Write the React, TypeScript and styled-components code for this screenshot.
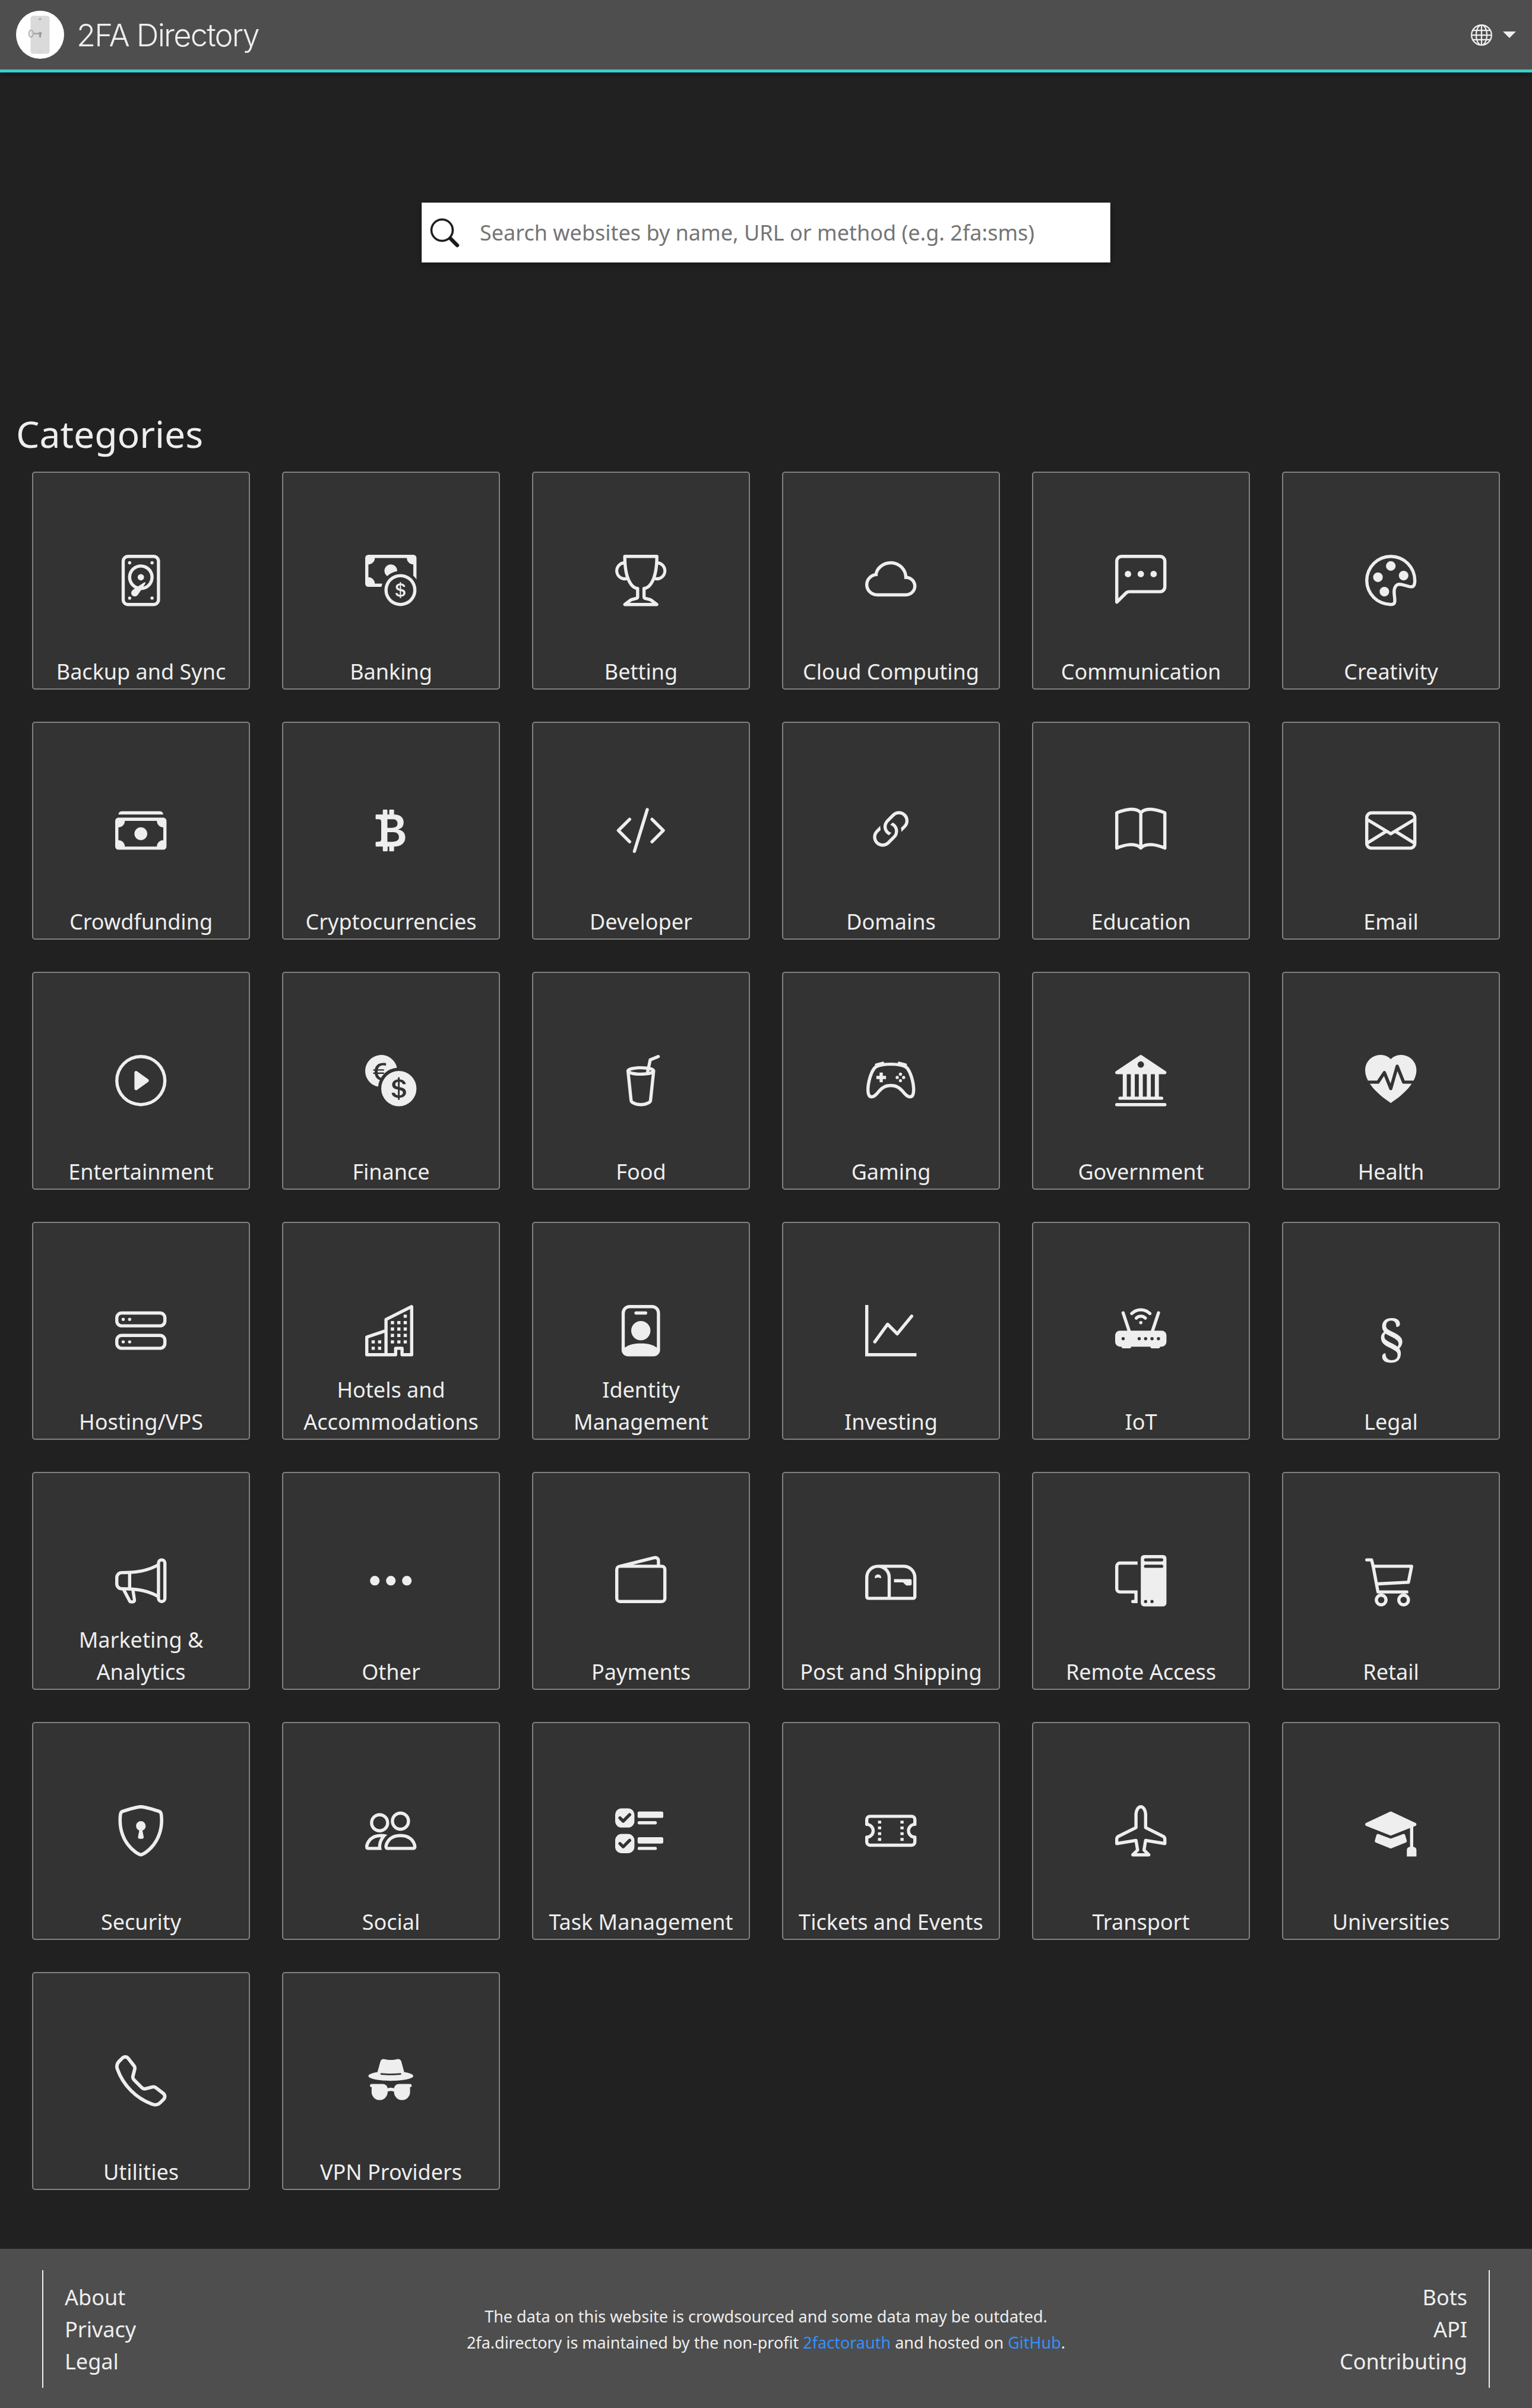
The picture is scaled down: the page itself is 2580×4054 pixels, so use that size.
import React from 'react';
import styled, { createGlobalStyle } from 'styled-components';
import type { IconType } from 'react-icons';
import {
  BsDeviceHdd, BsCashCoin, BsTrophy, BsCloud, BsChatLeftDots, BsPalette,
  BsCashStack, BsCurrencyBitcoin, BsCodeSlash, BsLink45Deg, BsBook, BsEnvelope,
  BsPlayCircle, BsCurrencyExchange, BsCupStraw, BsController, BsBank2, BsHeartPulseFill,
  BsHddStack, BsBuildings, BsPersonBadge, BsGraphUp, BsRouterFill,
  BsMegaphone, BsThreeDots, BsWallet2, BsMailbox, BsPcDisplay, BsCart3,
  BsShieldLock, BsPeople, BsUiChecks, BsTicketPerforated, BsAirplane, BsMortarboardFill,
  BsTelephone, BsGlobe,
} from 'react-icons/bs';

const GlobalStyle = createGlobalStyle`
  *, *::before, *::after { box-sizing: border-box; }
  body {
    margin: 0;
    background: #212121;
    color: #eee;
    font-family: "Noto Sans", "Liberation Sans", sans-serif;
    font-size: 36px;
    line-height: 54px;
  }
`;

const Page = styled.div`
  display: flex;
  flex-direction: column;
  min-height: 4054px;
`;

const Navbar = styled.header`
  display: flex;
  align-items: center;
  justify-content: space-between;
  height: 122px;
  padding: 0 27px;
  background: #4e4e4e;
  border-bottom: 5px solid #36cfcf;
  box-shadow: 0 3px 9px rgba(0, 0, 0, 0.4);
`;

const Brand = styled.a`
  display: flex;
  align-items: center;
  gap: 21px;
  color: #eee;
`;

const Logo = styled.svg`
  display: block;
  width: 81px;
  height: 81px;
`;

const BrandName = styled.span`
  font-family: Inter, "Liberation Sans", sans-serif;
  font-size: 52.3px;
  font-weight: 300;
  letter-spacing: -1.8px;
  white-space: nowrap;
`;

const LanguageButton = styled.button`
  display: flex;
  align-items: center;
  gap: 18px;
  padding: 0;
  border: 0;
  background: none;
  color: #eee;
  font-size: 36px;
`;

const Caret = styled.span`
  border-top: 11px solid #eee;
  border-left: 11px solid transparent;
  border-right: 11px solid transparent;
`;

const SearchArea = styled.section`
  display: flex;
  justify-content: center;
  padding: 219px 0;
`;

const SearchBox = styled.label`
  display: flex;
  align-items: center;
  width: 1160px;
  height: 101px;
  padding-left: 14px;
  gap: 35px;
  background: #fff;
  border: 1px solid #ddd;
  color: #1a1a1a;
  box-shadow: 0 4px 9px rgba(0, 0, 0, 0.3);
`;

const Magnifier = styled.svg`
  width: 48px;
  height: 48px;
  overflow: visible;
  fill: currentColor;
  stroke: currentColor;
  stroke-width: 0.2;
`;

const SearchInput = styled.input`
  flex: 1;
  padding: 0;
  border: 0;
  outline: 0;
  background: none;
  font-family: inherit;
  font-size: 36px;
  line-height: 54px;
  &::placeholder { color: #757575; opacity: 1; }
`;

const Content = styled.main`
  flex: 1;
  padding: 0 27px;
`;

const Heading = styled.h1`
  margin: 31px 0 27px;
  font-size: 62.4px;
  font-weight: 400;
  line-height: 75px;
`;

const Grid = styled.div`
  display: grid;
  grid-template-columns: repeat(6, 367px);
  gap: 54px;
  padding: 0 27px;
`;

const Card = styled.a`
  display: grid;
  height: 367px;
  border: 2px solid #808080;
  border-radius: 5px;
  background: #333;
  color: #eee;
  text-align: center;
  > * { grid-area: 1 / 1; }
`;

const CardIcon = styled.span`
  display: grid;
  place-items: center;
  font-size: 86.4px;
`;

const SectionSign = styled.span`
  padding-top: 21px;
  font-family: "Noto Serif", "Liberation Serif", serif;
  line-height: 1;
`;

const CardTitle = styled.span`
  align-self: end;
  padding: 0 10px 1px;
`;

const Footer = styled.footer`
  display: flex;
  justify-content: space-between;
  align-items: center;
  height: 268px;
  padding: 2px 71px 0;
  background: #4e4e4e;
`;

const FooterLinks = styled.nav<{ $end?: boolean }>`
  display: flex;
  flex: 1;
  flex-direction: column;
  justify-content: center;
  height: 198px;
  padding: 2px 36px 0;
  text-align: ${p => (p.$end ? 'right' : 'left')};
  border-${p => (p.$end ? 'right' : 'left')}: 2px solid #eee;
`;

const Note = styled.p`
  margin: 0;
  padding-top: 2px;
  font-size: 27px;
  line-height: 44px;
  text-align: center;
`;

const Link = styled.a`
  color: #3391ff;
`;

function Incognito() {
  return (
    <svg viewBox="0 0 16 16" width="1em" height="1em" fill="currentColor">
      <path
        fillRule="evenodd"
        d="m4.736 1.968-.892 3.269-.014.058C2.113 5.568 1 6.006 1 6.5 1 7.328 4.134 8 8 8s7-.672 7-1.5c0-.494-1.113-.932-2.83-1.205l-.014-.058-.892-3.27c-.146-.533-.698-.849-1.239-.734C9.411 1.363 8.62 1.5 8 1.5s-1.411-.136-2.025-.267c-.541-.115-1.093.2-1.239.735m.015 3.867a.25.25 0 0 1 .274-.224c.9.092 1.91.143 2.975.143a30 30 0 0 0 2.975-.143.25.25 0 0 1 .05.498c-.918.093-1.944.145-3.025.145s-2.107-.052-3.025-.145a.25.25 0 0 1-.224-.274M2 10.5q.001-.264.085-.5H2a.5.5 0 0 1 0-1h3.5a1.5 1.5 0 0 1 1.488 1.312 3.5 3.5 0 0 1 2.024 0A1.5 1.5 0 0 1 10.5 9H14a.5.5 0 0 1 0 1h-.085q.084.236.085.5v1a2.5 2.5 0 0 1-5 0v-.14l-.21-.07a2.5 2.5 0 0 0-1.58 0l-.21.07v.14a2.5 2.5 0 0 1-5 0z"
      />
    </svg>
  );
}

type Category = { name: string; icon?: IconType | (() => React.ReactElement) };

const categories: Category[] = [
  { name: 'Backup and Sync', icon: BsDeviceHdd },
  { name: 'Banking', icon: BsCashCoin },
  { name: 'Betting', icon: BsTrophy },
  { name: 'Cloud Computing', icon: BsCloud },
  { name: 'Communication', icon: BsChatLeftDots },
  { name: 'Creativity', icon: BsPalette },
  { name: 'Crowdfunding', icon: BsCashStack },
  { name: 'Cryptocurrencies', icon: BsCurrencyBitcoin },
  { name: 'Developer', icon: BsCodeSlash },
  { name: 'Domains', icon: BsLink45Deg },
  { name: 'Education', icon: BsBook },
  { name: 'Email', icon: BsEnvelope },
  { name: 'Entertainment', icon: BsPlayCircle },
  { name: 'Finance', icon: BsCurrencyExchange },
  { name: 'Food', icon: BsCupStraw },
  { name: 'Gaming', icon: BsController },
  { name: 'Government', icon: BsBank2 },
  { name: 'Health', icon: BsHeartPulseFill },
  { name: 'Hosting/VPS', icon: BsHddStack },
  { name: 'Hotels and Accommodations', icon: BsBuildings },
  { name: 'Identity Management', icon: BsPersonBadge },
  { name: 'Investing', icon: BsGraphUp },
  { name: 'IoT', icon: BsRouterFill },
  { name: 'Legal' },
  { name: 'Marketing & Analytics', icon: BsMegaphone },
  { name: 'Other', icon: BsThreeDots },
  { name: 'Payments', icon: BsWallet2 },
  { name: 'Post and Shipping', icon: BsMailbox },
  { name: 'Remote Access', icon: BsPcDisplay },
  { name: 'Retail', icon: BsCart3 },
  { name: 'Security', icon: BsShieldLock },
  { name: 'Social', icon: BsPeople },
  { name: 'Task Management', icon: BsUiChecks },
  { name: 'Tickets and Events', icon: BsTicketPerforated },
  { name: 'Transport', icon: BsAirplane },
  { name: 'Universities', icon: BsMortarboardFill },
  { name: 'Utilities', icon: BsTelephone },
  { name: 'VPN Providers', icon: Incognito },
];

function PhoneKeyLogo() {
  return (
    <Logo viewBox="0 0 81 81">
      <circle cx="40.5" cy="40.5" r="40.5" fill="#fff" />
      <rect x="24.5" y="8.5" width="32" height="64" rx="4.5" fill="#dadada" />
      <circle cx="40.5" cy="12" r="0.7" fill="#666" />
      <path d="M37.5 14.7h6" stroke="#888" strokeWidth="1" />
      <circle cx="40.5" cy="68" r="2.3" fill="none" stroke="#ccc" strokeWidth="0.8" />
      <circle cx="40.5" cy="38.5" r="2.8" fill="#999" />
      <path d="M39 39h3v6h-3z" fill="#999" />
      <path d="M29 38.6h12" stroke="#a6a6a6" strokeWidth="2.6" />
      <ellipse cx="25.3" cy="38.6" rx="3.5" ry="5.7" fill="none" stroke="#b0b0b0" strokeWidth="2.2" />
    </Logo>
  );
}

function SearchIcon() {
  return (
    <Magnifier viewBox="0 0 16 16">
      <path d="M10.442 10.442a1 1 0 0 1 1.415 0l3.85 3.85a1 1 0 0 1-1.414 1.415l-3.85-3.85a1 1 0 0 1 0-1.415z" />
      <path
        fillRule="evenodd"
        d="M6.5 12a5.5 5.5 0 1 0 0-11 5.5 5.5 0 0 0 0 11zM13 6.5a6.5 6.5 0 1 1-13 0 6.5 6.5 0 0 1 13 0z"
      />
    </Magnifier>
  );
}

export default function App() {
  return (
    <Page>
      <GlobalStyle />
      <Navbar>
        <Brand>
          <PhoneKeyLogo />
          <BrandName>2FA Directory</BrandName>
        </Brand>
        <LanguageButton aria-label="Language">
          <BsGlobe />
          <Caret />
        </LanguageButton>
      </Navbar>
      <SearchArea>
        <SearchBox>
          <SearchIcon />
          <SearchInput placeholder="Search websites by name, URL or method (e.g. 2fa:sms)" />
        </SearchBox>
      </SearchArea>
      <Content>
        <Heading>Categories</Heading>
        <Grid>
          {categories.map(({ name, icon: Icon }) => (
            <Card key={name}>
              <CardIcon>{Icon ? <Icon /> : <SectionSign>§</SectionSign>}</CardIcon>
              <CardTitle>{name}</CardTitle>
            </Card>
          ))}
        </Grid>
      </Content>
      <Footer>
        <FooterLinks>
          <a>About</a>
          <a>Privacy</a>
          <a>Legal</a>
        </FooterLinks>
        <Note>
          The data on this website is crowdsourced and some data may be outdated.
          <br />
          2fa.directory is maintained by the non-profit <Link>2factorauth</Link> and hosted on <Link>GitHub</Link>.
        </Note>
        <FooterLinks $end>
          <a>Bots</a>
          <a>API</a>
          <a>Contributing</a>
        </FooterLinks>
      </Footer>
    </Page>
  );
}
